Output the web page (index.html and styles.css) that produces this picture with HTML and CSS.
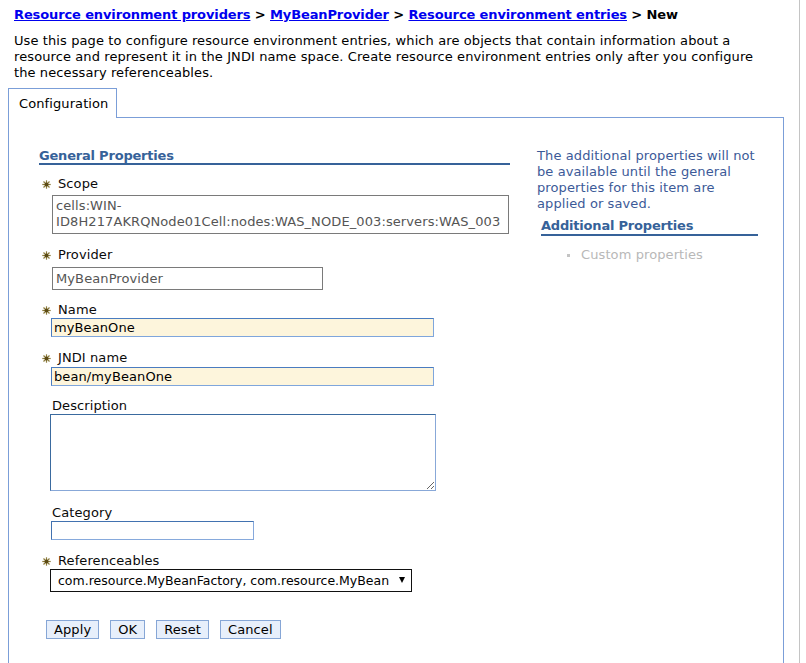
FILE: index.html
```html
<!DOCTYPE html>
<html lang="en">
<head>
<meta charset="utf-8">
<title>Resource environment entries - New</title>
<link rel="stylesheet" href="styles.css">
</head>
<body>
<div class="page">
  <div class="crumbs">
    <a href="#">Resource environment providers</a> &gt; <a href="#">MyBeanProvider</a> &gt; <a href="#">Resource environment entries</a> &gt; New
  </div>
  <p class="intro">Use this page to configure resource environment entries, which are objects that contain information about a resource and represent it in the JNDI name space. Create resource environment entries only after you configure the necessary referenceables.</p>

  <div class="tabs">
    <div class="tab">Configuration</div>
    <div class="tab-fill"></div>
  </div>

  <div class="panel">
    <div class="main">
      <h2 class="section">General Properties</h2>

      <div class="field f-scope">
        <div class="label req"><svg class="star" width="9" height="9" viewBox="0 0 9 9"><g stroke="#8c7c3c" stroke-width="1.2"><line x1="4.5" y1="0.3" x2="4.5" y2="8.7"/><line x1="0.3" y1="4.5" x2="8.7" y2="4.5"/><line x1="1.5" y1="1.5" x2="7.5" y2="7.5"/><line x1="7.5" y1="1.5" x2="1.5" y2="7.5"/></g><circle cx="4.5" cy="4.5" r="1.9" fill="#5a4a14"/></svg>Scope</div>
        <div class="readonly scope-box">cells:WIN-<br>ID8H217AKRQNode01Cell:nodes:WAS_NODE_003:servers:WAS_003</div>
      </div>

      <div class="field f-provider">
        <div class="label req"><svg class="star" width="9" height="9" viewBox="0 0 9 9"><g stroke="#8c7c3c" stroke-width="1.2"><line x1="4.5" y1="0.3" x2="4.5" y2="8.7"/><line x1="0.3" y1="4.5" x2="8.7" y2="4.5"/><line x1="1.5" y1="1.5" x2="7.5" y2="7.5"/><line x1="7.5" y1="1.5" x2="1.5" y2="7.5"/></g><circle cx="4.5" cy="4.5" r="1.9" fill="#5a4a14"/></svg>Provider</div>
        <div class="readonly provider-box">MyBeanProvider</div>
      </div>

      <div class="field f-name">
        <label class="label req" for="name"><svg class="star" width="9" height="9" viewBox="0 0 9 9"><g stroke="#8c7c3c" stroke-width="1.2"><line x1="4.5" y1="0.3" x2="4.5" y2="8.7"/><line x1="0.3" y1="4.5" x2="8.7" y2="4.5"/><line x1="1.5" y1="1.5" x2="7.5" y2="7.5"/><line x1="7.5" y1="1.5" x2="1.5" y2="7.5"/></g><circle cx="4.5" cy="4.5" r="1.9" fill="#5a4a14"/></svg>Name</label>
        <input id="name" class="text req-input wide" type="text" value="myBeanOne">
      </div>

      <div class="field f-jndi">
        <label class="label req" for="jndi"><svg class="star" width="9" height="9" viewBox="0 0 9 9"><g stroke="#8c7c3c" stroke-width="1.2"><line x1="4.5" y1="0.3" x2="4.5" y2="8.7"/><line x1="0.3" y1="4.5" x2="8.7" y2="4.5"/><line x1="1.5" y1="1.5" x2="7.5" y2="7.5"/><line x1="7.5" y1="1.5" x2="1.5" y2="7.5"/></g><circle cx="4.5" cy="4.5" r="1.9" fill="#5a4a14"/></svg>JNDI name</label>
        <input id="jndi" class="text req-input wide" type="text" value="bean/myBeanOne">
      </div>

      <div class="field f-desc">
        <label class="label opt" for="desc">Description</label>
        <textarea id="desc" class="desc"></textarea>
      </div>

      <div class="field f-cat">
        <label class="label opt" for="cat">Category</label>
        <input id="cat" class="text cat" type="text" value="">
      </div>

      <div class="field f-ref">
        <label class="label req" for="ref"><svg class="star" width="9" height="9" viewBox="0 0 9 9"><g stroke="#8c7c3c" stroke-width="1.2"><line x1="4.5" y1="0.3" x2="4.5" y2="8.7"/><line x1="0.3" y1="4.5" x2="8.7" y2="4.5"/><line x1="1.5" y1="1.5" x2="7.5" y2="7.5"/><line x1="7.5" y1="1.5" x2="1.5" y2="7.5"/></g><circle cx="4.5" cy="4.5" r="1.9" fill="#5a4a14"/></svg>Referenceables</label>
        <div class="select-wrap">
          <select id="ref" class="select"><option>com.resource.MyBeanFactory, com.resource.MyBean</option></select>
        </div>
      </div>

      <div class="buttons">
        <button type="button" class="btn">Apply</button>
        <button type="button" class="btn">OK</button>
        <button type="button" class="btn">Reset</button>
        <button type="button" class="btn">Cancel</button>
      </div>
    </div>

    <div class="side">
      <p class="note">The additional properties will not be available until the general properties for this item are applied or saved.</p>
      <h2 class="section side-head">Additional Properties</h2>
      <ul class="links">
        <li>Custom properties</li>
      </ul>
    </div>
  </div>
</div>
</body>
</html>
```

FILE: styles.css
```css
html, body {
  margin: 0;
  padding: 0;
  background: #ffffff;
}

body {
  font-family: "DejaVu Sans", Verdana, sans-serif;
  font-size: 13px;
  line-height: 16px;
  letter-spacing: 0.1px;
  color: #000000;
}

.page {
  width: 800px;
  min-height: 663px;
  box-sizing: border-box;
  padding: 0 15px 0 8px;
  border-right: 1px solid #c4c4c4;
  overflow: hidden;
}

.crumbs {
  padding: 7px 0 0 6px;
  font-weight: bold;
  letter-spacing: -0.12px;
}

.crumbs a {
  color: #0000ee;
  text-decoration: underline;
}

.intro {
  margin: 10px 0 0 0;
  padding-left: 6px;
  max-width: 742px;
}

.tabs {
  display: flex;
  margin-top: 7px;
  height: 30px;
}

.tab {
  width: 109px;
  box-sizing: border-box;
  border: 1px solid #7b9ed8;
  border-bottom: 0;
  padding: 7px 0 6px 10px;
  background: #ffffff;
}

.tab-fill {
  flex: 1;
  border-bottom: 1px solid #7b9ed8;
}

.panel {
  display: flex;
  gap: 27px;
  border: 1px solid #7b9ed8;
  border-top: 0;
  padding: 30px 24px 60px 30px;
}

.main {
  width: 471px;
  display: flex;
  flex-direction: column;
  align-items: flex-start;
}

.section {
  margin: 0;
  font-size: 13px;
  font-weight: bold;
  line-height: 15px;
  letter-spacing: -0.2px;
  color: #366299;
  border-bottom: 2px solid #366299;
  align-self: stretch;
}

.field {
  display: flex;
  flex-direction: column;
  align-items: flex-start;
}

.label {
  display: flex;
  align-items: center;
  height: 16px;
  color: #0a0a0a;
}

.label.req {
  padding-left: 3px;
}

.label.opt {
  padding-left: 13px;
}

.star {
  margin-right: 7px;
  flex: none;
}

.f-scope { margin-top: 11px; }
.f-provider { margin-top: 13px; }
.f-name { margin-top: 12px; }
.f-jndi { margin-top: 13px; }
.f-desc { margin-top: 12px; }
.f-cat { margin-top: 14px; }
.f-ref { margin-top: 13px; }

.readonly {
  box-sizing: border-box;
  border: 1px solid #7a7a7a;
  color: #555555;
  margin-left: 13px;
  padding: 0 3px;
}

.scope-box {
  width: 457px;
  margin-top: 3px;
  padding-top: 2px;
  padding-bottom: 3px;
  white-space: nowrap;
}

.provider-box {
  width: 271px;
  height: 23px;
  margin-top: 4px;
  line-height: 21px;
}

.text {
  box-sizing: border-box;
  height: 19px;
  margin: 0 0 0 12px;
  padding: 0 2px;
  font-family: "DejaVu Sans", Verdana, sans-serif;
  font-size: 13px;
  letter-spacing: 0.1px;
  color: #000000;
  border: 1px solid;
  border-color: #4272b0 #86a9dc #86a9dc #4272b0;
  border-radius: 0;
  background: #ffffff;
  outline: none;
}

.req-input {
  background: #fdf5dc;
  border-color: #4a7cc0 #7fa6dc #7fa6dc #4a7cc0;
}

.wide {
  width: 383px;
}

.f-jndi .text {
  margin-top: 1px;
}

.cat {
  width: 203px;
}

.desc {
  box-sizing: border-box;
  width: 386px;
  height: 77px;
  margin: 0 0 0 11px;
  padding: 2px;
  font-family: "DejaVu Sans", Verdana, sans-serif;
  font-size: 13px;
  border: 1px solid;
  border-color: #3a6a9f #88a8d8 #88a8d8 #3a6a9f;
  border-radius: 0;
  outline: none;
  display: block;
}

.select-wrap {
  position: relative;
  margin: 0 0 0 11px;
  width: 362px;
}

.select-wrap::after {
  content: "";
  position: absolute;
  right: 7px;
  top: 8px;
  width: 0;
  height: 0;
  border-left: 3px solid transparent;
  border-right: 3px solid transparent;
  border-top: 6px solid #000000;
  pointer-events: none;
}

.select {
  appearance: none;
  -webkit-appearance: none;
  box-sizing: border-box;
  width: 362px;
  height: 23px;
  margin: 0;
  padding: 0 14px 0 7px;
  font-family: "DejaVu Sans", Verdana, sans-serif;
  font-size: 12.5px;
  letter-spacing: 0;
  color: #000000;
  background: #ffffff;
  border: 1px solid #111111;
  border-radius: 0;
  outline: none;
  display: block;
}

.buttons {
  display: flex;
  gap: 11px;
  margin: 28px 0 0 7px;
}

.btn {
  box-sizing: border-box;
  height: 19px;
  padding: 0 7px;
  margin: 0;
  font-family: "DejaVu Sans", Verdana, sans-serif;
  font-size: 13px;
  line-height: 17px;
  letter-spacing: 0.1px;
  color: #000000;
  background: #e7effb;
  border: 1px solid #86a6d6;
  border-radius: 0;
}

.side {
  width: 222px;
  flex: none;
}

.note {
  margin: 0;
  color: #3c5a98;
}

.side-head {
  margin: 6px 0 0 4px;
  width: 217px;
  line-height: 16px;
}

.links {
  list-style: none;
  margin: 11px 0 0 30px;
  padding: 0;
}

.links li {
  display: flex;
  align-items: center;
  color: #b8b8b8;
}

.links li::before {
  content: "";
  width: 3px;
  height: 3px;
  background: #c4c4c4;
  margin-right: 11px;
  flex: none;
}
```
